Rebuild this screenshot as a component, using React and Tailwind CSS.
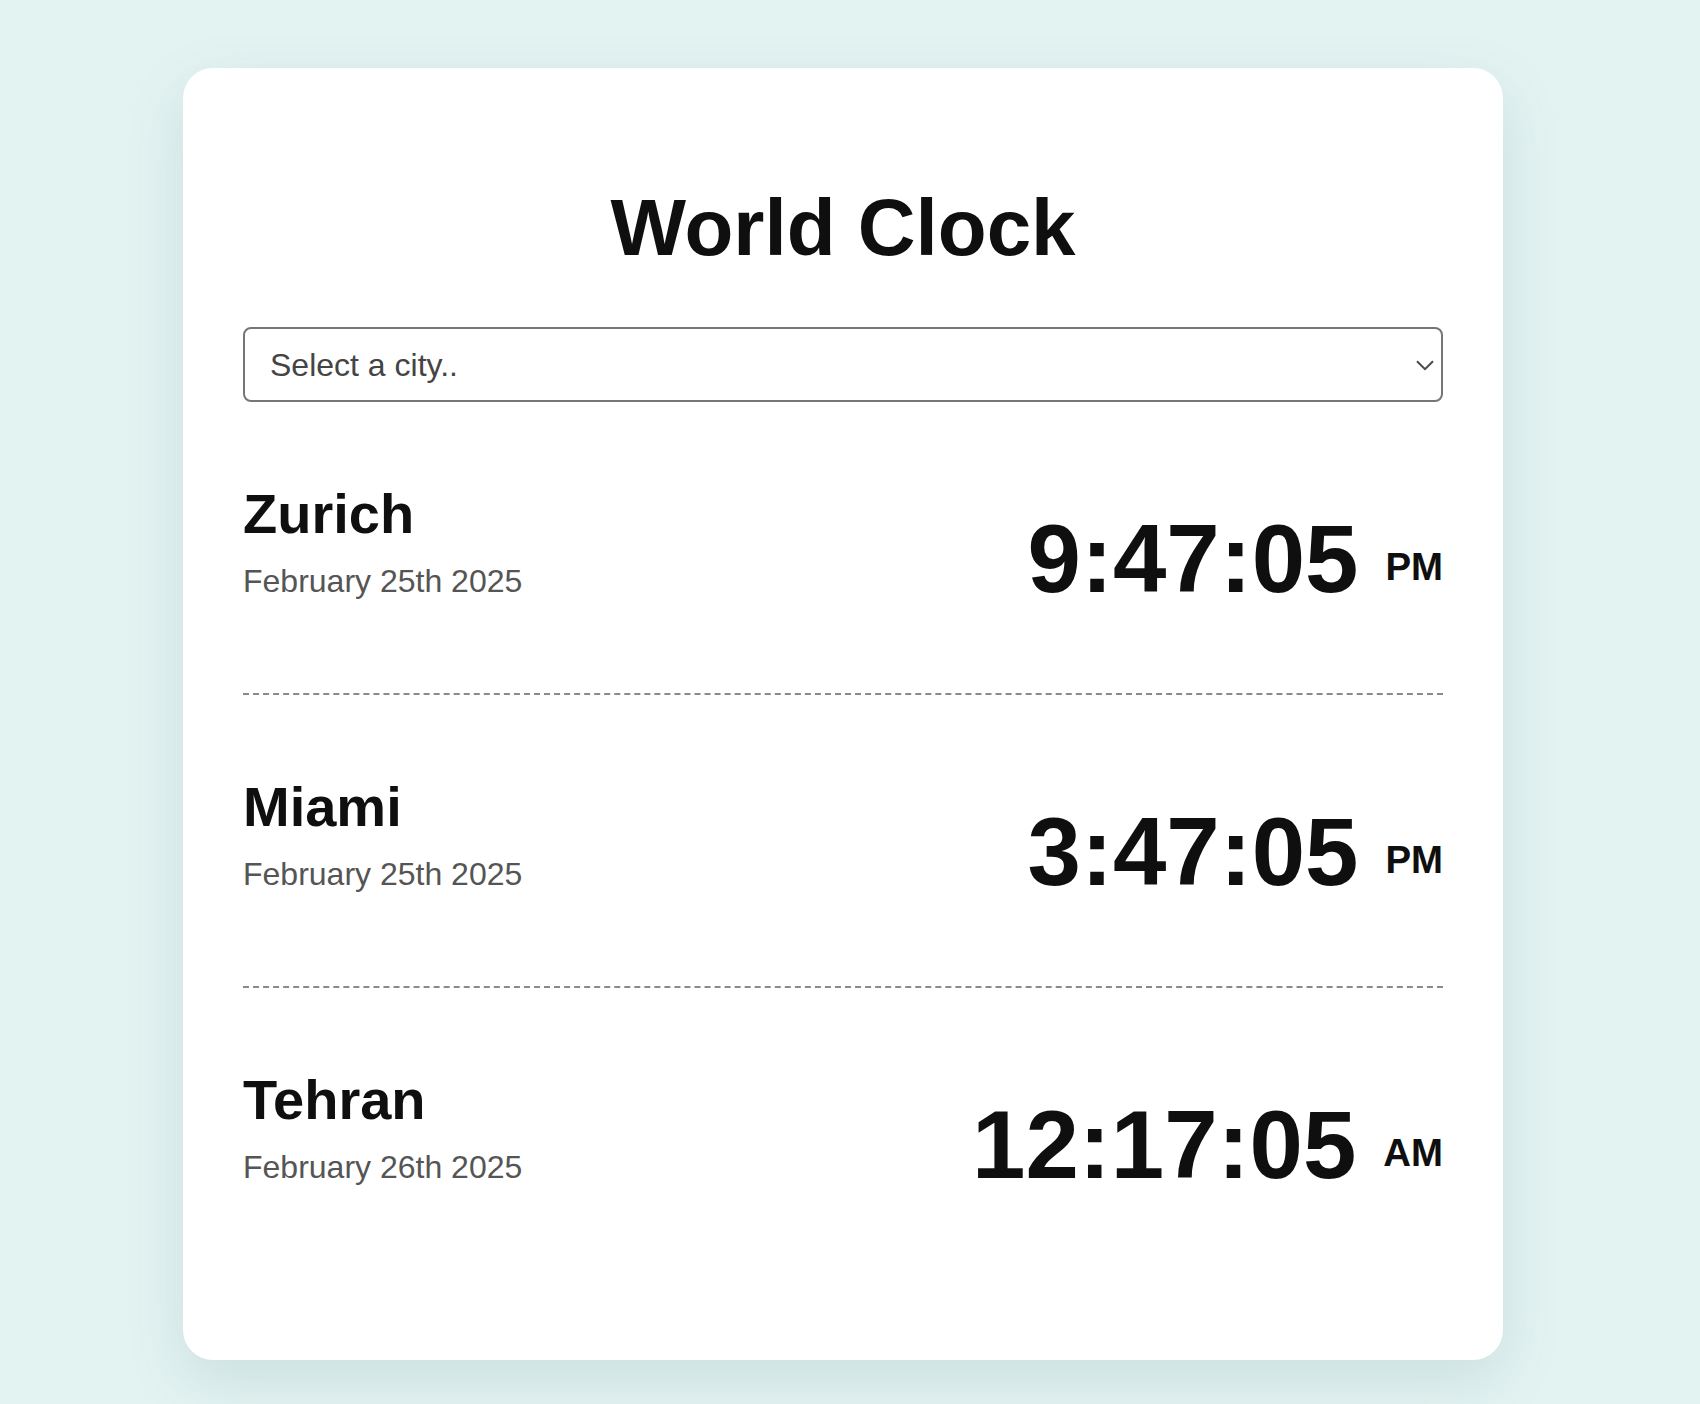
import React from "react";

const rows = [
  { city: "Zurich", date: "February 25th 2025", time: "9:47:05", ampm: "PM" },
  { city: "Miami", date: "February 25th 2025", time: "3:47:05", ampm: "PM" },
  { city: "Tehran", date: "February 26th 2025", time: "12:17:05", ampm: "AM" },
];

export default function App() {
  return (
    <div className="min-h-screen w-full bg-[#e3f3f2] font-[Liberation_Sans,Arial,sans-serif] pt-[68px] pb-[46px] pl-[183px]">
      <div className="w-[1320px] rounded-[30px] bg-white px-[60px] pt-[114px] pb-[81px] shadow-[0_20px_60px_rgba(40,90,90,0.13)]">
        <h1 className="text-center text-[80px] font-bold leading-[92px] text-[#0f0f0f]">World Clock</h1>
        <div className="relative mt-[53px]">
          <select
            className="block h-[75px] w-full appearance-none rounded-[8px] border-2 border-[#767676] bg-white pl-[25px] text-[32px] leading-[36px] text-[#444444] outline-none"
            defaultValue=""
          >
            <option value="">Select a city..</option>
          </select>
          <svg
            className="pointer-events-none absolute right-[9px] top-[33px]"
            width="18"
            height="11"
            viewBox="0 0 18 11"
            fill="none"
          >
            <path d="M1 1.2 L9 9.2 L17 1.2" stroke="#4a4a4a" strokeWidth="2" />
          </svg>
        </div>
        <div>
          {rows.map((r, i) => (
            <div
              key={r.city}
              className={
                i < rows.length - 1
                  ? "flex items-start justify-between border-b-2 border-dashed border-[#8a8a8a] pt-[80px] pb-[84px]"
                  : "flex items-start justify-between pt-[80px] pb-[84px]"
              }
            >
              <div>
                <div className="text-[56px] font-bold leading-[64px] text-[#0f0f0f]">{r.city}</div>
                <div className="mt-[17px] text-[32px] leading-[36px] text-[#555555]">{r.date}</div>
              </div>
              <div className="mt-[27px] text-[96px] font-bold leading-[100px] text-[#0f0f0f] whitespace-nowrap">
                {r.time}
                <span className="ml-[27px] text-[38.4px] leading-none align-[12px]">{r.ampm}</span>
              </div>
            </div>
          ))}
        </div>
      </div>
    </div>
  );
}
